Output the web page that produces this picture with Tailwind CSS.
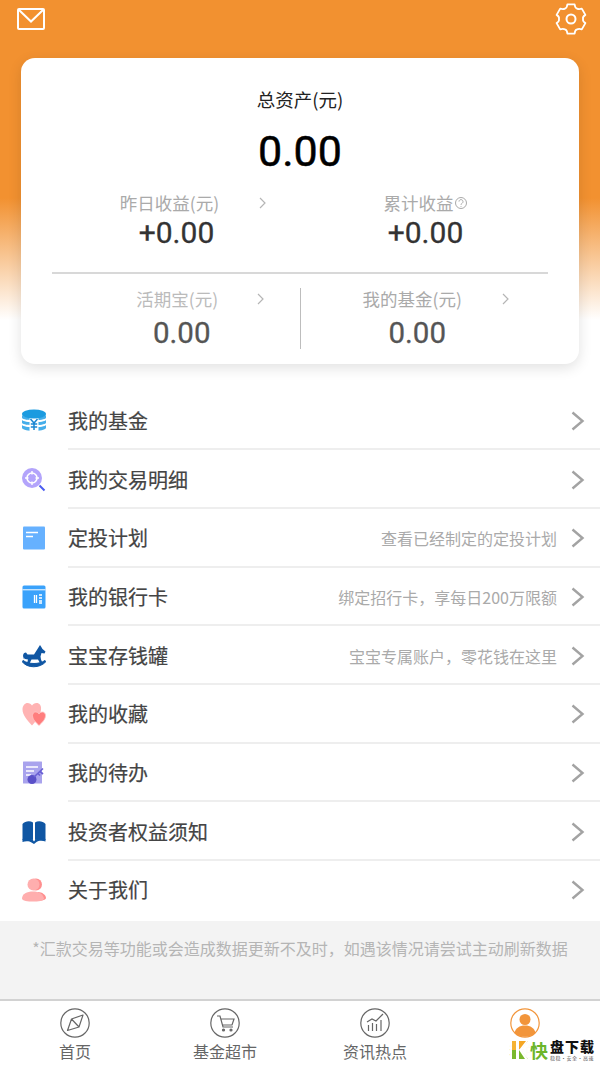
<!DOCTYPE html>
<html lang="zh">
<head>
<meta charset="utf-8">
<script src="https://cdn.jsdelivr.net/npm/@tailwindcss/browser@4"></script>
</head>
<body class="m-0">
<div class="relative w-[600px] h-[1067px] overflow-hidden bg-white flex flex-col font-['Noto_Sans_CJK_SC','Noto_Sans',sans-serif]">
  <!-- header -->
  <div class="h-[391px] shrink-0 px-[21px] bg-[linear-gradient(to_bottom,#f29130_0px,#f29130_198px,#ffffff_320px)]">
    <div class="h-[58px] flex justify-between items-start">
      <svg class="mt-[8px] ml-[-4px]" width="28" height="22" viewBox="0 0 28 22" fill="none" stroke="#fff" stroke-width="2"><rect x="1" y="1" width="26" height="20" rx="1"/><path d="M1.500 1.500 14 13.500 26.500 1.500"/></svg>
      <svg class="mt-[3px] mr-[-8px]" width="32" height="32" viewBox="0 0 32 32" fill="none" stroke="#fff" stroke-width="1.800" stroke-linejoin="round"><path d="M12.400 1.450 19.600 1.450Q20 5 22 5.600Q24 6.500 26.800 5.600L30.400 11.900Q27.500 13.500 28 16Q27.500 18.500 30.400 20.100L26.800 26.400Q24 25.500 22 26.400Q20 27 19.600 30.550L12.400 30.550Q12 27 10 26.400Q8 25.500 5.200 26.400L1.600 20.100Q4.500 18.500 4 16Q4.500 13.500 1.600 11.900L5.200 5.600Q8 6.500 10 5.600Q12 5 12.400 1.450Z"/><circle cx="16" cy="16" r="4.500" stroke-width="2"/></svg>
    </div>
    <div class="h-[306px] bg-white rounded-[14px] shadow-[0_4px_14px_rgba(0,0,0,0.12)] flex flex-col items-center">
      <div class="mt-[27px] h-[28px] leading-[28px] text-[18.500px] text-[#222]">总资产(元)</div>
      <div class="mt-[8px] h-[60px] leading-[60px] text-[43px] [-webkit-text-stroke:0.5px_black] text-black font-['Roboto',sans-serif]">0.00</div>
      <!-- row 1 -->
      <div class="w-full flex mt-[10px] h-[60px]">
        <div class="w-[279px] relative flex flex-col items-center pl-[32px]">
          <div class="relative left-[-7px] h-[24px] leading-[24px] text-[17.500px] text-[#aaa]">昨日收益(元)</div>
          <div class="mt-[2px] h-[32px] leading-[32px] text-[30px] text-[#333] [-webkit-text-stroke:0.3px_#333] font-['Roboto',sans-serif]">+0.00</div>
          <svg class="absolute left-[238px] top-[6px]" width="8" height="12" viewBox="0 0 8 12" fill="none" stroke="#b5b5b5" stroke-width="1.200"><path d="M1 1l5 5-5 5"/></svg>
        </div>
        <div class="w-[279px] flex flex-col items-center pr-[28px]">
          <div class="h-[24px] leading-[24px] text-[17.500px] text-[#aaa] flex items-center">累计收益<svg width="14" height="14" viewBox="0 0 14 14" fill="none" stroke="#aaa"><circle cx="7" cy="7" r="5.500"/><path d="M5 5.600a2 2 0 1 1 3.200 1.600c-.8.500-1.200.9-1.200 1.600M7 10v.8"/></svg></div>
          <div class="mt-[2px] h-[32px] leading-[32px] text-[30px] text-[#333] [-webkit-text-stroke:0.3px_#333] font-['Roboto',sans-serif]">+0.00</div>
        </div>
      </div>
      <div class="mt-[21px] w-[496px] h-[2px] bg-[#d8d8d8] shrink-0"></div>
      <!-- row 2 -->
      <div class="w-[496px] flex mt-[14px] h-[61px]">
        <div class="flex-1 relative flex flex-col items-center">
          <div class="pl-[3px] mt-[-1px] h-[24px] leading-[24px] text-[17.500px] text-[#bbb]">活期宝(元)</div>
          <div class="relative left-[6px] mt-[6px] h-[32px] leading-[32px] text-[29.500px] text-[#555] [-webkit-text-stroke:0.3px_#555] font-['Roboto',sans-serif]">0.00</div>
          <svg class="absolute left-[205px] top-[5px]" width="8" height="12" viewBox="0 0 8 12" fill="none" stroke="#b5b5b5" stroke-width="1.200"><path d="M1 1l5 5-5 5"/></svg>
        </div>
        <div class="w-[1px] h-[61px] bg-[#bdbdbd]"></div>
        <div class="flex-1 relative flex flex-col items-center">
          <div class="relative left-[-12px] mt-[-1px] h-[24px] leading-[24px] text-[17.500px] text-[#aaa]">我的基金(元)</div>
          <div class="relative left-[-7px] mt-[6px] h-[32px] leading-[32px] text-[29.500px] text-[#555] [-webkit-text-stroke:0.3px_#555] font-['Roboto',sans-serif]">0.00</div>
          <svg class="absolute left-[201px] top-[5px]" width="8" height="12" viewBox="0 0 8 12" fill="none" stroke="#b5b5b5" stroke-width="1.200"><path d="M1 1l5 5-5 5"/></svg>
        </div>
      </div>
    </div>
  </div>

  <!-- list -->
  <div class="h-[530px] shrink-0 flex flex-col pt-[0.500px]">
    <div class="h-[58.700px] flex items-center pl-[22px]">
      <svg class="w-[24px] h-[24px] shrink-0" viewBox="0 0 24 24"><path d="M0 6c2 3 22 3 24 0v3c-2 3-22 3-24 0zM0 11c2 3 22 3 24 0v3c-2 3-22 3-24 0zM0 16c2 3 22 3 24 0v3c-2 4-22 4-24 0z" fill="#45aeea"/><path d="M7.500 9h9v14h-9z" fill="#fff"/><ellipse cx="12" cy="5" rx="12" ry="4.500" fill="#1b9be0"/><path d="M8.500 10 12 14l3.500-4M12 14v7M8.800 15h6.400M8.800 18h6.400" fill="none" stroke="#1b86d2" stroke-width="1.500"/></svg>
      <div class="ml-[22px] flex-1 flex items-center h-full pr-[15px] pt-[2px] border-b-2 border-[#eeeeee]">
        <span class="text-[20px] text-[#444] [-webkit-text-stroke:0.2px_#444] flex-1">我的基金</span>
        <svg width="14" height="20" viewBox="0 0 14 20" fill="none" stroke="#a3a3a3" stroke-width="2.400"><path d="M1.500 1.500 11.500 10 1.500 18.500"/></svg>
      </div>
    </div>
    <div class="h-[58.700px] flex items-center pl-[22px]">
      <svg class="w-[24px] h-[24px] shrink-0" viewBox="0 0 24 24"><circle cx="10" cy="10" r="10" fill="#b3a4fb"/><circle cx="10" cy="10" r="5" fill="none" stroke="#fff" stroke-width="1.600"/><path d="M10 3v3.500M10 13.500v3.500M3 10h3.500M13.500 10h3.500" stroke="#fff" stroke-width="1.400"/><path d="M17.500 17.500l5 5" stroke="#4a5cf0" stroke-width="2"/></svg>
      <div class="ml-[22px] flex-1 flex items-center h-full pr-[15px] pt-[2px] border-b-2 border-[#eeeeee]">
        <span class="text-[20px] text-[#444] [-webkit-text-stroke:0.2px_#444] flex-1">我的交易明细</span>
        <svg width="14" height="20" viewBox="0 0 14 20" fill="none" stroke="#a3a3a3" stroke-width="2.400"><path d="M1.500 1.500 11.500 10 1.500 18.500"/></svg>
      </div>
    </div>
    <div class="h-[58.700px] flex items-center pl-[22px]">
      <svg class="w-[24px] h-[24px] shrink-0" viewBox="0 0 24 24"><rect x="1" y="0.500" width="22" height="23" rx="1" fill="#66b1ff"/><path d="M4 6.500h12M4 10.500h7" stroke="#fff" stroke-width="1.600"/></svg>
      <div class="ml-[22px] flex-1 flex items-center h-full pr-[15px] pt-[2px] border-b-2 border-[#eeeeee]">
        <span class="text-[20px] text-[#444] [-webkit-text-stroke:0.2px_#444] flex-1">定投计划</span>
        <span class="text-[16px] text-[#aaa] mr-[14px]">查看已经制定的定投计划</span>
        <svg width="14" height="20" viewBox="0 0 14 20" fill="none" stroke="#a3a3a3" stroke-width="2.400"><path d="M1.500 1.500 11.500 10 1.500 18.500"/></svg>
      </div>
    </div>
    <div class="h-[58.700px] flex items-center pl-[22px]">
      <svg class="w-[24px] h-[24px] shrink-0" viewBox="0 0 24 24"><rect x="0.500" y="0.500" width="23" height="23" rx="1.500" fill="#3aa2fb"/><path d="M0.500 4.800h23" stroke="#fff" stroke-width="1"/><path d="M12.500 10v8M14.500 10v8M17 10h3M17 13h3M17 16h3M17 18h3" stroke="#fff" stroke-width="1.300"/></svg>
      <div class="ml-[22px] flex-1 flex items-center h-full pr-[15px] pt-[2px] border-b-2 border-[#eeeeee]">
        <span class="text-[20px] text-[#444] [-webkit-text-stroke:0.2px_#444] flex-1">我的银行卡</span>
        <span class="text-[16px] text-[#aaa] mr-[14px]">绑定招行卡，享每日200万限额</span>
        <svg width="14" height="20" viewBox="0 0 14 20" fill="none" stroke="#a3a3a3" stroke-width="2.400"><path d="M1.500 1.500 11.500 10 1.500 18.500"/></svg>
      </div>
    </div>
    <div class="h-[58.700px] flex items-center pl-[22px]">
      <svg class="w-[24px] h-[24px] shrink-0" viewBox="0 0 24 24"><path d="M1 12c0-2.500 1.500-3.500 3-3.500L5.500 10.500h6.500l3.500-5.500L18 1l1 1.500 1.500 2.500 3 2.500-1 2-3-.5-1 3.500.5 3 1.500 3.500h-2.500l-2-3.500H9.500L7.500 19.500H5l1-4-3-.5-.5-1-.5 1.500z" fill="#0f56a3"/><path d="M0 17.500c5 7 18 7 24 0l-1-1c-6 4-16 4-22 0z" fill="#0f56a3" stroke="#0f56a3" stroke-width="1"/></svg>
      <div class="ml-[22px] flex-1 flex items-center h-full pr-[15px] pt-[2px] border-b-2 border-[#eeeeee]">
        <span class="text-[20px] text-[#444] [-webkit-text-stroke:0.2px_#444] flex-1">宝宝存钱罐</span>
        <span class="text-[16px] text-[#aaa] mr-[14px]">宝宝专属账户，零花钱在这里</span>
        <svg width="14" height="20" viewBox="0 0 14 20" fill="none" stroke="#a3a3a3" stroke-width="2.400"><path d="M1.500 1.500 11.500 10 1.500 18.500"/></svg>
      </div>
    </div>
    <div class="h-[58.700px] flex items-center pl-[22px]">
      <svg class="w-[24px] h-[24px] shrink-0" viewBox="0 0 24 24"><path d="M10 23.500C5 18 .5 13 .5 7.500.5 3.500 3 1 5.500 1 7.500 1 9 2 10 3.500 11 2 12.500 1 14.500 1c3 0 5 2.500 4.500 6.500C18.500 12.500 15 18 10 23.500z" fill="#ffb3b3"/><path d="M17 23.500c-3-3-6.500-6-6.500-10 0-2.200 1.500-3.500 3-3.500 1.500 0 2.800.7 3.500 2 .7-1.300 2-2 3.300-2 2 0 3.200 1.500 3.200 3.500 0 4-3.500 7-6.500 10z" fill="#ff7d7d" stroke="#ffc4c4" stroke-width="0.800"/></svg>
      <div class="ml-[22px] flex-1 flex items-center h-full pr-[15px] pt-[2px] border-b-2 border-[#eeeeee]">
        <span class="text-[20px] text-[#444] [-webkit-text-stroke:0.2px_#444] flex-1">我的收藏</span>
        <svg width="14" height="20" viewBox="0 0 14 20" fill="none" stroke="#a3a3a3" stroke-width="2.400"><path d="M1.500 1.500 11.500 10 1.500 18.500"/></svg>
      </div>
    </div>
    <div class="h-[58.700px] flex items-center pl-[22px]">
      <svg class="w-[24px] h-[24px] shrink-0" viewBox="0 0 24 24"><rect x="1" y="0.500" width="19" height="22" rx="0.500" fill="#a9a3ed"/><path d="M4 6h12M4 10h8M4 14h5" stroke="#fff" stroke-width="1.500"/><circle cx="10" cy="18.500" r="4.500" fill="#5a50c8"/><path d="M12 16l9-8.500M18 10.500l3 2.500M16 12.500l2 2" stroke="#6a60d4" stroke-width="1.700"/></svg>
      <div class="ml-[22px] flex-1 flex items-center h-full pr-[15px] pt-[2px] border-b-2 border-[#eeeeee]">
        <span class="text-[20px] text-[#444] [-webkit-text-stroke:0.2px_#444] flex-1">我的待办</span>
        <svg width="14" height="20" viewBox="0 0 14 20" fill="none" stroke="#a3a3a3" stroke-width="2.400"><path d="M1.500 1.500 11.500 10 1.500 18.500"/></svg>
      </div>
    </div>
    <div class="h-[58.700px] flex items-center pl-[22px]">
      <svg class="w-[24px] h-[24px] shrink-0" viewBox="0 0 24 24"><path d="M.5 4C3 1 8 .500 11 2.500V20C8 18.500 3.500 18.500.5 20zM23.500 4C21 1 16 .500 13 2.500V20c3-1.500 7.500-1.500 10.500 0z" fill="#0f56a3"/><path d="M.5 19c3-1 7.500-1 10 .5L12 21.500l1.500-2c2.500-1.500 7-1.500 10-.5v2.500c-3-1-7-1-9 .5L12 24l-2.500-1.500c-2-1.500-6-1.500-9-.5z" fill="#0f56a3"/></svg>
      <div class="ml-[22px] flex-1 flex items-center h-full pr-[15px] pt-[2px] border-b-2 border-[#eeeeee]">
        <span class="text-[20px] text-[#444] [-webkit-text-stroke:0.2px_#444] flex-1">投资者权益须知</span>
        <svg width="14" height="20" viewBox="0 0 14 20" fill="none" stroke="#a3a3a3" stroke-width="2.400"><path d="M1.500 1.500 11.500 10 1.500 18.500"/></svg>
      </div>
    </div>
    <div class="h-[58.700px] flex items-center pl-[22px]">
      <svg class="w-[24px] h-[24px] shrink-0" viewBox="0 0 24 24"><circle cx="14" cy="6.500" r="6" fill="#ff8f8f"/><path d="M10 23c8 0 14-.5 14-3 0-3-4-6-8-6z" fill="#ff8f8f"/><circle cx="11.500" cy="6.500" r="6" fill="#ffaeae"/><path d="M0 20.500C0 16 5 13.500 11 13.500S21 16 22 20.500c0 2.500-6 3-11 3S0 23 0 20.500z" fill="#ffaeae"/></svg>
      <div class="ml-[22px] flex-1 flex items-center h-full pr-[15px]">
        <span class="text-[20px] text-[#444] [-webkit-text-stroke:0.2px_#444] flex-1">关于我们</span>
        <svg width="14" height="20" viewBox="0 0 14 20" fill="none" stroke="#a3a3a3" stroke-width="2.400"><path d="M1.500 1.500 11.500 10 1.500 18.500"/></svg>
      </div>
    </div>
  </div>

  <!-- footer note -->
  <div class="h-[78px] shrink-0 bg-[#f3f3f3] pt-[15px] text-center text-[16px] leading-[24px] text-[#b5b5b5]">*汇款交易等功能或会造成数据更新不及时，如遇该情况请尝试主动刷新数据</div>

  <!-- bottom nav -->
  <div class="flex-1 border-t-2 border-[#d2d2d2] bg-white flex">
    <div class="w-[150px] flex flex-col items-center pt-[7px]">
      <svg width="30" height="30" viewBox="0 0 30 30" fill="none" stroke="#666" stroke-width="1.200"><circle cx="15" cy="15" r="14.200"/><path d="M23 7 19 19 7.500 22.500 11.500 11z M11.500 11 19 19" stroke-linejoin="round"/></svg>
      <span class="mt-[2px] text-[16px] leading-[22px] text-[#666]">首页</span>
    </div>
    <div class="w-[150px] flex flex-col items-center pt-[7px]">
      <svg width="30" height="30" viewBox="0 0 30 30" fill="none" stroke="#666" stroke-width="1.200"><circle cx="15" cy="15" r="14.200"/><path d="M7 8h3l3 11h10M10.800 11H24l-2 6H12.500"/><circle cx="13.500" cy="22" r="1" fill="#666"/><circle cx="21" cy="22" r="1" fill="#666"/></svg>
      <span class="mt-[2px] text-[16px] leading-[22px] text-[#666]">基金超市</span>
    </div>
    <div class="w-[150px] flex flex-col items-center pt-[7px]">
      <svg width="30" height="30" viewBox="0 0 30 30" fill="none" stroke="#666" stroke-width="1.200"><circle cx="15" cy="15" r="14.200"/><path d="M7 14l5-3 4 2 7-7M8.500 17v6M12.500 15v8M16.500 16v7M21 12v11"/></svg>
      <span class="mt-[2px] text-[16px] leading-[22px] text-[#666]">资讯热点</span>
    </div>
    <div class="w-[150px] flex flex-col items-center pt-[7px]">
      <svg width="30" height="30" viewBox="0 0 30 30" fill="none"><circle cx="15" cy="15" r="14.200" stroke="#f2953a" stroke-width="1.200"/><circle cx="15" cy="11.500" r="5.500" fill="#f2953a"/><path d="M4.500 25c1-5 5-7.500 10.500-7.500S24.500 20 25.500 25c-5 5-16 5-21 0z" fill="#f2953a"/></svg>
      <span class="mt-[2px] text-[16px] leading-[22px] text-[#f2953a]/40">我的</span>
    </div>
  </div>

  <!-- watermark -->
  <div class="absolute left-[510px] top-[1039px] w-[90px] h-[22px] bg-white/90 flex items-start pl-[2px]">
    <svg class="mt-[2px] shrink-0" width="16" height="18" viewBox="0 0 16 18"><path d="M0 0h16L8 9z" fill="#f5a623"/><path d="M0 0h5v18H0z" fill="#f5b335"/><path d="M0 18V9h5zM5 9l3 0 8 9H0z" fill="#7ab82d"/><path d="M4 0h3v18H4zM7 9l7-9h2L9 9l7 9h-3z" fill="#fff"/></svg>
    <span class="ml-[2px] text-[18px] leading-[22px] text-[#6cb52a] font-bold">快</span>
    <div class="ml-[2px] flex flex-col items-start">
      <span class="text-[14px] leading-[15px] text-[#111] font-black tracking-[1px] whitespace-nowrap">盘下载</span>
      <span class="text-[5px] leading-[7px] text-[#555] tracking-[0.500px] whitespace-nowrap">稳稳·安全·高速</span>
    </div>
  </div>
</div>
</body>
</html>
